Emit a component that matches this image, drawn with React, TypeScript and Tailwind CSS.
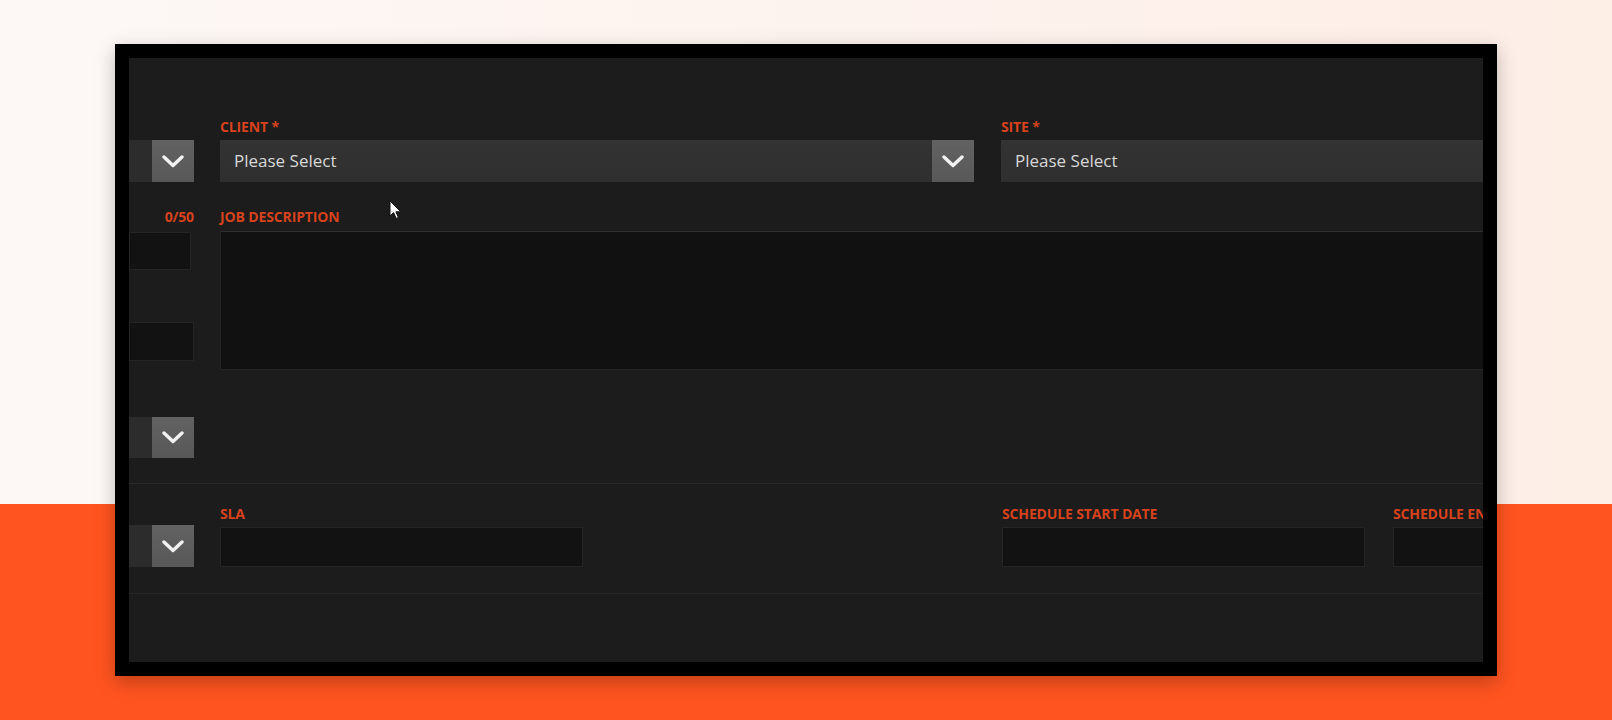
import React from 'react';

const Chevron: React.FC = () => (
  <svg width="22" height="13" viewBox="0 0 22 13" fill="none">
    <polyline points="2,2 11,10.5 20,2" stroke="#f2f2f2" strokeWidth="3.4" strokeLinecap="round" strokeLinejoin="round" />
  </svg>
);

const Label: React.FC<{ text: string; className?: string }> = ({ text, className = '' }) => (
  <div
    className={`h-[18px] text-[14px] leading-[18px] font-bold uppercase tracking-[-0.01em] text-[#d6421c] whitespace-nowrap ${className}`}
    style={{ fontFamily: '"Open Sans", sans-serif' }}
  >
    {text}
  </div>
);

const Select: React.FC<{ placeholder?: string; height?: string; bodyBg?: string }> = ({
  placeholder,
  height = 'h-[42px]',
  bodyBg = 'bg-[linear-gradient(to_bottom,#333333,#2f2f2f)]',
}) => (
  <div className={`flex ${height} w-full`}>
    <div className={`flex-1 min-w-0 ${bodyBg} flex items-center pl-[14px] text-[17px] text-[#d8d8d8]`}>
      {placeholder}
    </div>
    <div className="w-[42px] shrink-0 bg-[linear-gradient(to_bottom,#626262,#585858)] flex items-center justify-center">
      <Chevron />
    </div>
  </div>
);

const Field: React.FC<{ height: string }> = ({ height }) => (
  <div className={`${height} w-full bg-[#121212] border border-[#242424]`} />
);

const App: React.FC = () => {
  return (
    <div
      className="w-[1612px] h-[720px] overflow-hidden pt-[44px] pl-[115px] bg-[linear-gradient(to_bottom,transparent_504px,#ff5420_504px),linear-gradient(to_right,#fdf8f6,#fdeee6)]"
      style={{ fontFamily: '"Open Sans", sans-serif' }}
    >
      <div className="w-[1382px] h-[632px] bg-black p-[14px] shadow-[0_6px_18px_rgba(0,0,0,0.25)]">
        <div className="relative w-full h-full bg-[#1c1c1c] overflow-hidden">
          {/* upper section */}
          <div className="flex h-[426px] border-b border-[#282828]">
            {/* left clipped column */}
            <div className="w-[65px] shrink-0 flex flex-col pt-[82px]">
              <Select bodyBg="bg-[#2c2c2c]" />
              <div className="mt-[26px] flex justify-end">
                <Label text="0/50" />
              </div>
              <div className="mt-[6px] w-[62px]">
                <Field height="h-[38px]" />
              </div>
              <div className="mt-[52px]">
                <Field height="h-[39px]" />
              </div>
              <div className="mt-[56px]">
                <Select height="h-[41px]" bodyBg="bg-[#2c2c2c]" />
              </div>
            </div>

            {/* main columns */}
            <div className="ml-[26px] w-[1600px] shrink-0 pt-[60px]">
              <div className="grid grid-cols-[754px_754px] gap-x-[27px]">
                <div>
                  <Label text="CLIENT *" className="mb-[4px]" />
                  <Select placeholder="Please Select" />
                </div>
                <div>
                  <Label text="SITE *" className="mb-[4px]" />
                  <Select placeholder="Please Select" />
                </div>
              </div>
              <div className="mt-[26px]">
                <Label text="JOB DESCRIPTION" className="mb-[5px]" />
                <div className="h-[139px] w-full bg-[#111111] border border-[#262626] border-t-[#2e2e2e]" />
              </div>
            </div>
          </div>

          {/* lower section */}
          <div className="flex h-[110px] border-b border-[#252525]">
            <div className="w-[65px] shrink-0 pt-[41px]">
              <Select bodyBg="bg-[#2c2c2c]" />
            </div>
            <div className="ml-[26px] w-[1600px] shrink-0 pt-[21px] grid grid-cols-[363px_363px_363px_363px] gap-x-[28px]">
              <div>
                <Label text="SLA" className="mb-[4px]" />
                <Field height="h-[40px]" />
              </div>
              <div />
              <div>
                <Label text="SCHEDULE START DATE" className="mb-[4px]" />
                <Field height="h-[40px]" />
              </div>
              <div>
                <Label text="SCHEDULE END DATE" className="mb-[4px]" />
                <Field height="h-[40px]" />
              </div>
            </div>
          </div>

          {/* mouse pointer */}
          <svg className="absolute left-[260px] top-[142px]" width="13" height="20" viewBox="0 0 13 20">
            <path d="M1 1 L1 16 L4.6 12.6 L7.2 18.4 L9.4 17.4 L6.9 11.8 L11.8 11.8 Z" fill="#ffffff" stroke="#111111" strokeWidth="1" strokeLinejoin="round" />
          </svg>
        </div>
      </div>
    </div>
  );
};

export default App;
